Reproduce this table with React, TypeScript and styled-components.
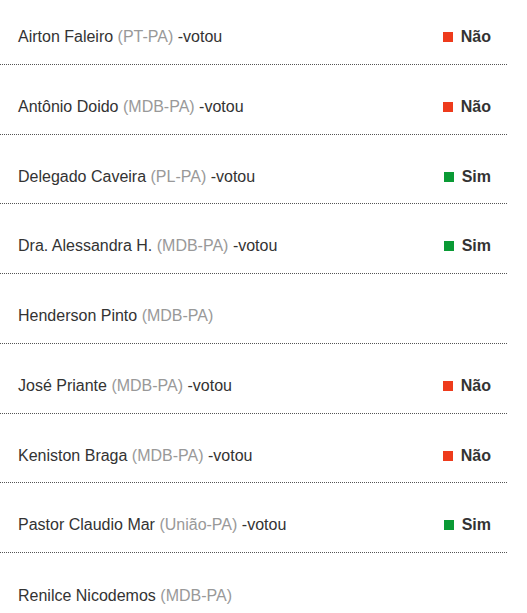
import styled, { createGlobalStyle } from "styled-components";

const GlobalStyle = createGlobalStyle`
  body {
    margin: 0;
    background: #fff;
    font-family: Arial, "Liberation Sans", sans-serif;
  }
`;

const List = styled.ul`
  list-style: none;
  margin: 0;
  padding: 0;
  width: 507px;
`;

const Row = styled.li`
  display: flex;
  align-items: center;
  justify-content: space-between;
  height: 69.75px;
  box-sizing: border-box;
  padding: 32px 16px 16.75px 18px;
  border-bottom: 1px dotted #555;
  font-size: 16px;
  line-height: 20px;
  color: #333;

  &:first-child {
    height: 64.75px;
    padding-top: 27px;
  }

  &:last-child {
    border-bottom: none;
  }
`;

const Name = styled.span`
  color: #333;
`;

const Party = styled.span`
  color: #999;
`;

const Vote = styled.span`
  display: flex;
  align-items: center;
  gap: 8px;
  font-weight: bold;
  color: #333;
`;

const Square = styled.i<{ $yes: boolean }>`
  display: block;
  width: 10px;
  height: 10px;
  background: ${(p) => (p.$yes ? "#0a9a35" : "#ee3b1c")};
`;

type Dep = { name: string; party: string; vote?: "Sim" | "Não" };

const deps: Dep[] = [
  { name: "Airton Faleiro", party: "PT-PA", vote: "Não" },
  { name: "Antônio Doido", party: "MDB-PA", vote: "Não" },
  { name: "Delegado Caveira", party: "PL-PA", vote: "Sim" },
  { name: "Dra. Alessandra H.", party: "MDB-PA", vote: "Sim" },
  { name: "Henderson Pinto", party: "MDB-PA" },
  { name: "José Priante", party: "MDB-PA", vote: "Não" },
  { name: "Keniston Braga", party: "MDB-PA", vote: "Não" },
  { name: "Pastor Claudio Mar", party: "União-PA", vote: "Sim" },
  { name: "Renilce Nicodemos", party: "MDB-PA" },
];

export default function App() {
  return (
    <>
      <GlobalStyle />
      <List>
        {deps.map((d) => (
          <Row key={d.name}>
            <span>
              <Name>{d.name}</Name> <Party>({d.party})</Party>
              {d.vote ? " -votou" : ""}
            </span>
            {d.vote && (
              <Vote>
                <Square $yes={d.vote === "Sim"} />
                {d.vote}
              </Vote>
            )}
          </Row>
        ))}
      </List>
    </>
  );
}
